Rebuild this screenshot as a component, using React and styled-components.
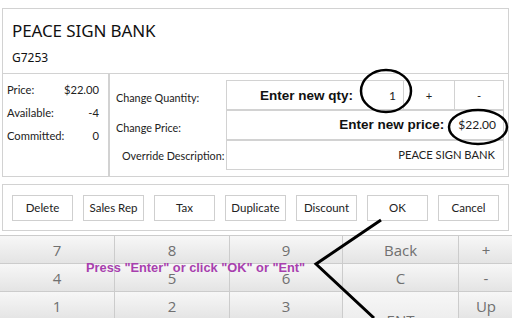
import React from "react";
import styled, { createGlobalStyle } from "styled-components";

const Global = createGlobalStyle`
  html, body { margin: 0; padding: 0; background: #fff; overflow: hidden; }
  body { font-family: "Noto Sans", "Open Sans", sans-serif; color: #222; }
  * { box-sizing: border-box; }
`;

const Page = styled.div`
  position: relative;
  width: 512px;
  height: 318px;
  overflow: hidden;
  padding-top: 8px;
`;

const Header = styled.div`
  margin-left: 2px;
  width: 507px;
  height: 66px;
  border: 1px solid #d2d2d2;
  padding: 11px 0 0 9px;
  display: flex;
  flex-direction: column;
`;

const Title = styled.div`
  font-size: 17px;
  line-height: 22px;
  color: #111;
  letter-spacing: -0.1px;
`;

const Code = styled.div`
  font-size: 12px;
  line-height: 16px;
  margin-top: 8px;
  color: #111;
`;

const InfoRow = styled.div`
  display: flex;
  margin-left: 2px;
  width: 507px;
  height: 104px;
  margin-top: -1px;
`;

const StatsPanel = styled.div`
  width: 108px;
  border: 1px solid #d2d2d2;
  border-right-width: 2px;
  padding: 8px 9px 0 4px;
  display: flex;
  flex-direction: column;
  gap: 7px;
`;

const StatLine = styled.div`
  display: flex;
  justify-content: space-between;
  font-family: "Lato", "Noto Sans", sans-serif;
  font-size: 11.2px;
  line-height: 16px;
  color: #222;
`;

const EditPanel = styled.div`
  flex: 1;
  border: 1px solid #d2d2d2;
  border-left: none;
  padding: 6px 4px 0 6px;
  display: flex;
  flex-direction: column;
`;

const EditRow = styled.div`
  display: flex;
  align-items: center;
  height: 30px;
`;

const EditLabel = styled.div`
  width: 111px;
  white-space: nowrap;
  font-family: "Lato", "Noto Sans", sans-serif;
  font-size: 10.8px;
  color: #222;
  padding-left: ${(p) => p.$indent || 0}px;
  padding-top: ${(p) => p.$down || 0}px;
`;

const Field = styled.div`
  flex: ${(p) => (p.$w ? "none" : 1)};
  width: ${(p) => (p.$w ? `${p.$w}px` : "auto")};
  height: 100%;
  border: 1px solid #d2d2d2;
  margin-left: -1px;
  margin-top: ${(p) => (p.$first ? 0 : -1)}px;
  display: flex;
  align-items: center;
  justify-content: ${(p) => (p.$center ? "center" : "flex-end")};
  padding-right: ${(p) => (p.$center ? 0 : p.$pr || 7)}px;
  font-family: "Lato", "Noto Sans", sans-serif;
  font-size: 11.2px;
  color: #222;
`;

const BoldLabel = styled.span`
  font-family: "Liberation Sans", Arial, sans-serif;
  font-weight: bold;
  font-size: 13.5px;
  color: #111;
  margin-right: ${(p) => p.$gap}px;
`;

const Value = styled.span`
  font-family: "Lato", "Noto Sans", sans-serif;
  font-size: 12px;
  color: #222;
`;

const ButtonBar = styled.div`
  margin: 7px 0 0 2px;
  width: 507px;
  height: 47px;
  border: 1px solid #d2d2d2;
  display: flex;
  align-items: center;
  padding-left: 9px;
  gap: 10px;
`;

const ActionButton = styled.div`
  width: 61px;
  height: 26px;
  border: 1px solid #cfcfcf;
  background: #fff;
  display: flex;
  align-items: center;
  justify-content: center;
  font-family: "Lato", "Noto Sans", sans-serif;
  font-size: 11.5px;
  color: #222;
`;

const Keypad = styled.div`
  margin-top: 4px;
  display: grid;
  grid-template-columns: 115px 115px 113px 116px 1fr;
  grid-template-rows: 28px 28px 28px 28px;
  width: 514px;
  margin-left: -1px;
`;

const Key = styled.div`
  grid-row: ${(p) => p.$row || "auto"};
  grid-column: ${(p) => p.$col || "auto"};
  border: 1px solid #cccccc;
  margin: 0 -1px -1px 0;
  background: linear-gradient(#f7f7f7, #e4e4e4);
  display: flex;
  align-items: center;
  justify-content: center;
  font-family: "Open Sans", "Noto Sans", sans-serif;
  font-size: 15px;
  color: #707070;
`;

const Hint = styled.div`
  position: absolute;
  left: 86px;
  top: 260px;
  font-family: "Liberation Sans", Arial, sans-serif;
  font-weight: bold;
  font-size: 12.8px;
  color: #a83fae;
  white-space: nowrap;
`;

const Overlay = styled.svg`
  position: absolute;
  left: 0;
  top: 0;
  pointer-events: none;
`;

const actions = ["Delete", "Sales Rep", "Tax", "Duplicate", "Discount", "OK", "Cancel"];

export default function App() {
  return (
    <>
      <Global />
      <Page>
        <Header>
          <Title>PEACE SIGN BANK</Title>
          <Code>G7253</Code>
        </Header>
        <InfoRow>
          <StatsPanel>
            <StatLine><span>Price:</span><span>$22.00</span></StatLine>
            <StatLine><span>Available:</span><span>-4</span></StatLine>
            <StatLine><span>Committed:</span><span>0</span></StatLine>
          </StatsPanel>
          <EditPanel>
            <EditRow>
              <EditLabel $down={4}>Change Quantity:</EditLabel>
              <Field $first>
                <BoldLabel $gap={36}>Enter new qty:</BoldLabel>
                <Value>1</Value>
              </Field>
              <Field $first $w={52} $center>+</Field>
              <Field $first $w={50} $center>-</Field>
            </EditRow>
            <EditRow>
              <EditLabel $down={4}>Change Price:</EditLabel>
              <Field>
                <BoldLabel $gap={14}>Enter new price:</BoldLabel>
                <Value>$22.00</Value>
              </Field>
            </EditRow>
            <EditRow>
              <EditLabel $indent={6}>Override Description:</EditLabel>
              <Field $pr={8}>PEACE SIGN BANK</Field>
            </EditRow>
          </EditPanel>
        </InfoRow>
        <ButtonBar>
          {actions.map((a) => (
            <ActionButton key={a}>{a}</ActionButton>
          ))}
        </ButtonBar>
        <Keypad>
          <Key>7</Key>
          <Key>8</Key>
          <Key>9</Key>
          <Key>Back</Key>
          <Key>+</Key>
          <Key>4</Key>
          <Key>5</Key>
          <Key>6</Key>
          <Key>C</Key>
          <Key>-</Key>
          <Key>1</Key>
          <Key>2</Key>
          <Key>3</Key>
          <Key $row="3 / span 2" $col="4">ENT</Key>
          <Key>Up</Key>
          <Key>0</Key>
          <Key>.</Key>
          <Key>00</Key>
          <Key>Dn</Key>
        </Keypad>
        <Hint>Press "Enter" or click "OK" or "Ent"</Hint>
        <Overlay width="512" height="318" viewBox="0 0 512 318">
          <ellipse cx="386" cy="91" rx="25" ry="21" fill="none" stroke="#000" strokeWidth="2.5" />
          <ellipse cx="478" cy="127" rx="29" ry="17" fill="none" stroke="#000" strokeWidth="2.5" />
          <polyline points="381,220 316,264 374,318" fill="none" stroke="#000" strokeWidth="3" />
        </Overlay>
      </Page>
    </>
  );
}
